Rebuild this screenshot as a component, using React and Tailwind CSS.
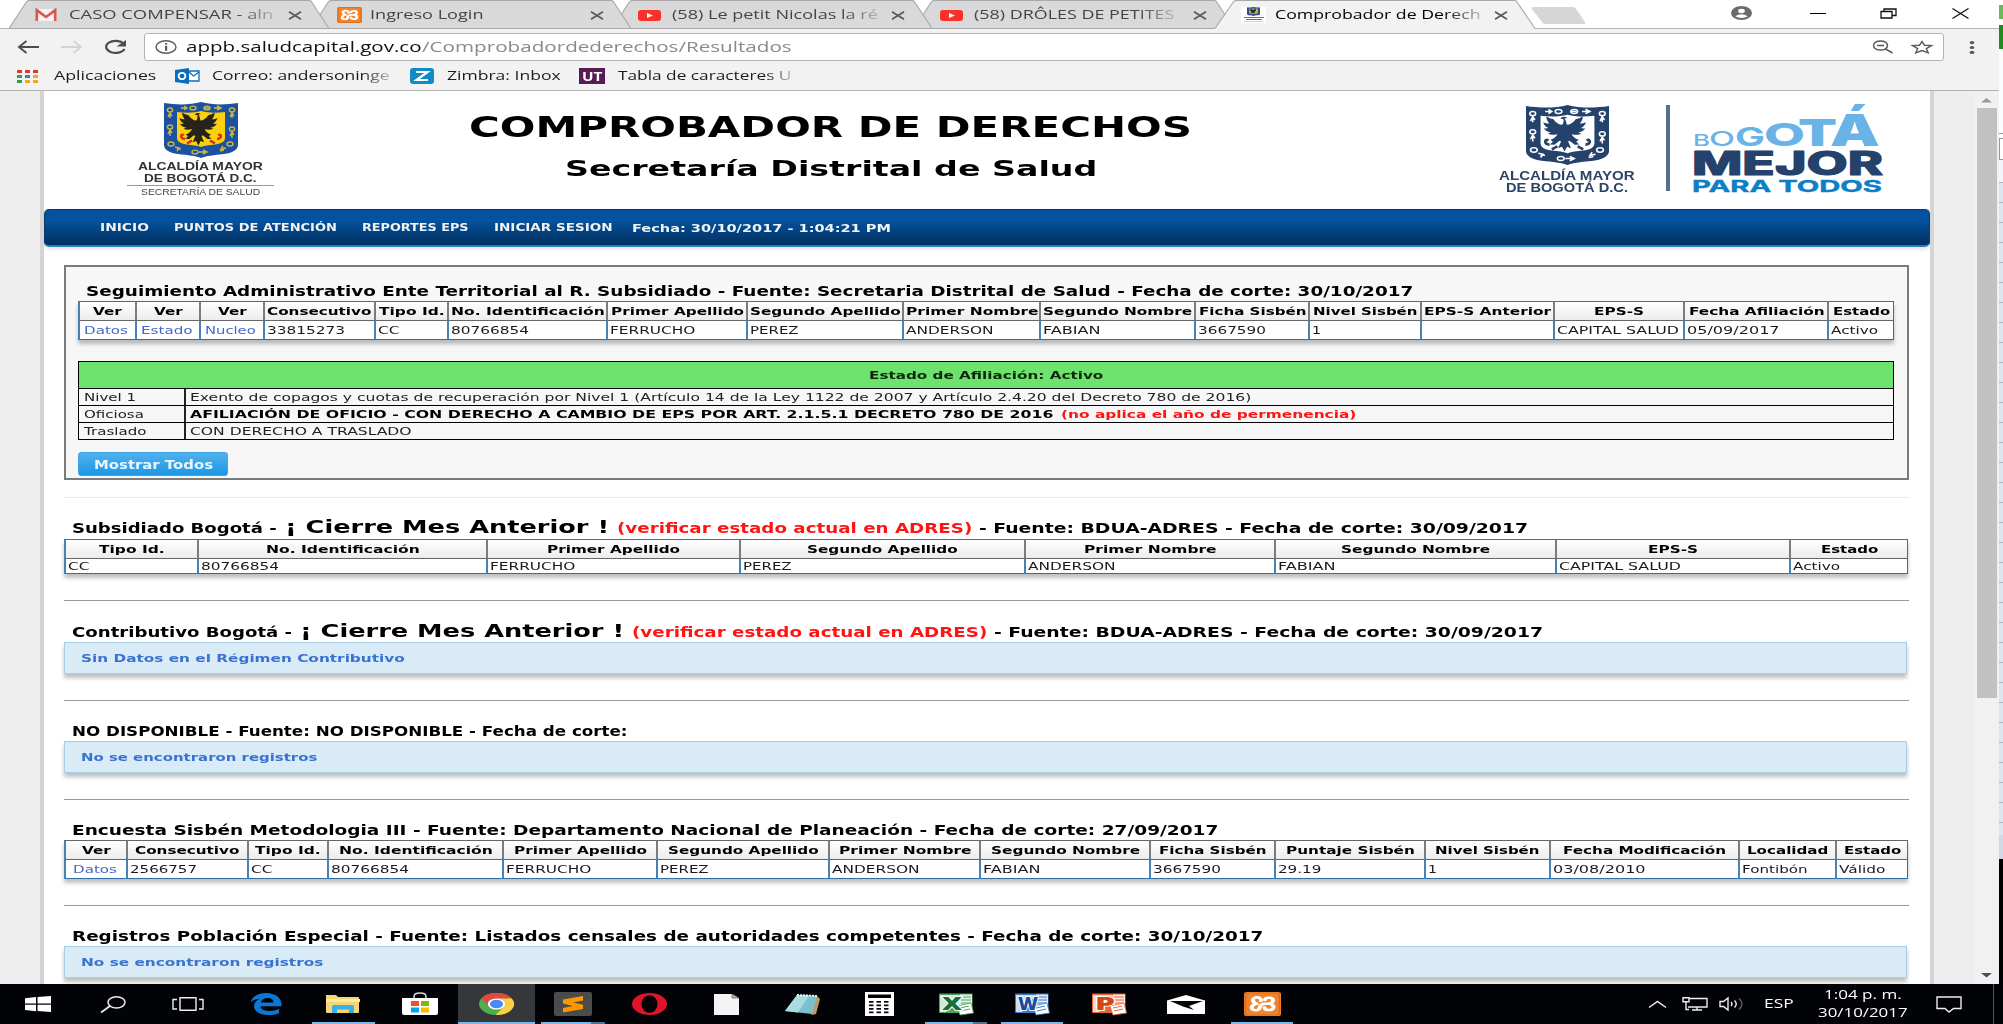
import { useLayoutEffect, useRef, useState } from "react";

const VERDANA = "font-['DejaVu_Sans',sans-serif]";
const SEGOE = "font-['Open_Sans','Noto_Sans',sans-serif]";

/* Single line of text, stretched horizontally to fill an exact width. */
function T({ w, className = "", children }) {
  const ref = useRef(null);
  const [k, setK] = useState(1);
  useLayoutEffect(() => {
    const fit = () => {
      if (ref.current && ref.current.offsetWidth) setK(w / ref.current.offsetWidth);
    };
    fit();
    document.fonts?.ready.then(fit);
  }, [w, children]);
  return (
    <span className={`block shrink-0 whitespace-nowrap ${className}`} style={{ width: w }}>
      <span ref={ref} className="inline-block origin-left" style={{ transform: `scaleX(${k})` }}>
        {children}
      </span>
    </span>
  );
}

function Svg({ w, h, vb, className = "", children }) {
  return (
    <svg width={w} height={h} viewBox={vb || `0 0 ${w} ${h}`} preserveAspectRatio="none" className={`block shrink-0 overflow-visible ${className}`}>
      {children}
    </svg>
  );
}

/* ---------- Icons ---------- */

const Gmail = () => (
  <Svg w={22} h={12} vb="0 0 22 12">
    <path d="M1 0h20v12H1z" fill="#f5f1f1" />
    <path d="M1.800 12V1.200L11 8l9.200-6.800V12" fill="none" stroke="#d9584c" strokeWidth="2.600" />
  </Svg>
);

const Xampp = ({ w, h }) => (
  <Svg w={w} h={h} vb="0 0 24 24">
    <rect width="24" height="24" rx="2" fill="#f0832f" />
    <rect x="1" y="1" width="22" height="22" rx="2" fill="none" stroke="#e26a14" strokeWidth="1" />
    <g fill="none" stroke="#fff" strokeWidth="2.600" strokeLinecap="round" strokeLinejoin="round">
      <path d="M11 9V8a2.600 2.600 0 0 0-5.200 0c0 2 .8 3 2.500 3.700-2 .7-3.300 1.900-3.300 4a2.600 2.600 0 0 0 5.200 0c0-2.500 1.500-4 4-4h1.300" />
      <path d="M13.500 8c.3-3 5-3 5.300 0 .2 2-.8 3.200-2.400 3.800 2 .6 3 2 2.700 4-.6 3-5.600 3-5.800-.2" />
    </g>
  </Svg>
);

const YouTube = () => (
  <Svg w={23} h={11} vb="0 0 23 11">
    <rect width="23" height="11" rx="3" fill="#f8312f" />
    <path d="M9 3l6 2.500L9 8z" fill="#fff" />
  </Svg>
);

const Cross = () => (
  <Svg w={14} h={9} vb="0 0 14 9">
    <path d="M1 .7l12 7.600M13 .7L1 8.300" stroke="#5a5a5a" strokeWidth="1.700" />
  </Svg>
);

const EAGLE =
  "M37 16c-2-1.800-4-.8-4.600.2l2 .6c.2 1.600 0 3-.8 4.200-2 0-4.400-1.600-6-4.400-1.400 0-3-.8-4.600-2 .2 3 1.200 4.400 2 5.400-1.600 0-3-.4-4-1 .6 2.400 2 3.600 3.400 4.400-1 .4-2 .4-3 .2 1 2 3 2.800 4.600 3-.6.6-1.200.8-2 1 2 1.200 4.600 1 6.400.2-.6 1.600-2 3.400-4.600 4.400l1.600 1.400-2 2 3 .2 3.400-3 1 .6-2 5 2.600-1 1.600 3.600 1.800-3.600 2.600 1-2-5 1-.6 3.400 3 3-.2-2-2 1.600-1.400c-2.600-1-4-2.800-4.600-4.400 1.800.8 4.400 1 6.400-.2-.8-.2-1.400-.4-2-1 1.600-.2 3.600-1 4.600-3-1 .2-2 .2-3-.2 1.400-.8 2.800-2 3.400-4.400-1 .6-2.400 1-4 1 .8-1 1.800-2.400 2-5.400-1.600 1.200-3.200 2-4.600 2-1.600 2.800-4 4.400-6 4.400-.4-2-.6-3.600-1.600-5z";

function Shield({ w, h, frame, field, eagle, chain, fruit }) {
  return (
    <Svg w={w} h={h} vb="0 0 74 56">
      <path d="M0 1c13 2 26 2 37-1 11 3 24 3 37 1v42c0 5-6 8-14 9-10 1-18 2-23 4-5-2-13-3-23-4-8-1-14-4-14-9z" fill={frame} />
      <path d="M13 10c9 1 17 1 24-1 7 2 15 2 24 1v26c0 4-5 6-10 6.500-6 .5-10 1-14 2.500-4-1.500-8-2-14-2.500-5-.5-10-2.500-10-6.500z" fill={field} />
      <g fill="none" stroke={chain} strokeWidth="1.400">
        <ellipse cx="6" cy="8" rx="2.600" ry="2" />
        <path d="M4 15l2-4 2 3M6 11v5" />
        <ellipse cx="6" cy="25" rx="2.600" ry="2" />
        <path d="M4 32l2-4 2 3M6 28v6" />
        <ellipse cx="68" cy="8" rx="2.600" ry="2" />
        <path d="M66 15l2-4 2 3M68 11v5" />
        <ellipse cx="68" cy="27" rx="2.600" ry="2" />
        <path d="M66 34l2-4 2 3M68 30v6" />
        <path d="M17 6h6M20 4l3 2-3 2M45 6h-5M50 6h6M53 4l4 2-4 2" />
        <ellipse cx="29" cy="6" rx="3" ry="1.900" />
        <ellipse cx="43" cy="6" rx="3" ry="1.900" />
        <ellipse cx="7" cy="42" rx="3" ry="2" />
        <path d="M11 45l4 1-2 3M17 47h-4" />
        <ellipse cx="31" cy="50" rx="3" ry="1.900" />
        <path d="M35 50h6M39 48l4 2-4 2" />
        <ellipse cx="66" cy="42" rx="3" ry="2" />
        <path d="M62 46l-5 1 2-3M56 49l4-1" />
      </g>
      <path d={EAGLE} fill={eagle} transform="translate(-13 -7.750) scale(1.350 1.250)" />
      <path d="M20 33c-4-2-4 4 1 4M28 38.500l-5 3M54 33c4-2 4 4-1 4M46 38.500l5 3" stroke={fruit} strokeWidth="2.400" fill="none" />
    </Svg>
  );
}

/* ---------- Browser chrome ---------- */

const TABS = [
  { icon: <Gmail />, label: "CASO COMPENSAR - aln", w: 205, fade: true, gap: 12 },
  { icon: <Xampp w={25} h={16} />, label: "Ingreso Login", w: 113, gap: 8 },
  { icon: <YouTube />, label: "(58) Le petit Nicolas la ré", w: 206, fade: true, gap: 11 },
  { icon: <YouTube />, label: "(58) DRÔLES DE PETITES", w: 200, fade: true, gap: 11 },
  {
    icon: (
      <div className="flex h-4 w-[25px] flex-col items-center bg-white">
        <Shield w={13} h={9} frame="#2a4f8f" field="#e8c52a" eagle="#222" chain="#4a6ca0" fruit="#a33" />
        <div className="mt-px h-px w-5 bg-gray-500" />
        <div className="mt-px h-px w-4 bg-gray-500" />
        <div className="mt-px h-px w-5 bg-gray-300" />
      </div>
    ),
    label: "Comprobador de Derech",
    w: 205,
    fade: true,
    gap: 9,
    active: true,
  },
];
const TAB_Z = ["z-[4]", "z-[3]", "z-[2]", "z-[1]", "z-[5]"];

function Tab({ tab, index }) {
  return (
    <div className={`relative -mr-[18.500px] h-[29px] w-[320px] shrink-0 ${TAB_Z[index]}`}>
      <svg width="320" height="29" className="absolute inset-0">
        <path
          d={tab.active ? "M0 29V28.500L18 2.500Q19.500.5 21 .5H299Q301 .5 302 2L319.500 28.500V29z" : "M0 28.500L17 2.500Q18.500.5 20 .5H300Q302 .5 303 2.500L320 28.500z"}
          fill={tab.active ? "#f2f2f2" : "#d9d9d9"}
        />
        <path
          d={tab.active ? "M0 28.500L18 2.500Q19.500.5 21 .5H299Q301 .5 302 2L320 28.500" : "M0 28.500L17 2.500Q18.500.5 20 .5H300Q302 .5 303 2.500L320 28.500z"}
          fill="none"
          stroke="#a9a9a9"
          strokeWidth="1.200"
        />
      </svg>
      <div className="relative flex h-[29px] items-center pl-[26px] pt-px">
        {tab.icon}
        <div className="w-[236px] shrink-0" style={{ paddingLeft: tab.gap }}>
          <T
            w={tab.w}
            className={`text-[12px] leading-[28px] ${tab.active ? "text-black" : "text-[#444]"} ${tab.fade ? "[mask-image:linear-gradient(to_right,#000_82%,rgba(0,0,0,.25))]" : ""}`}
          >
            {tab.label}
          </T>
        </div>
      </div>
      <div className="absolute left-[279px] top-[11px]">
        <Cross />
      </div>
    </div>
  );
}

function TabStrip() {
  return (
    <div className="flex h-[29px] w-[1999px] bg-white pl-[9px] shadow-[inset_0_-1px_0_#b4b4b4]">
      {TABS.map((t, i) => (
        <Tab key={t.label} tab={t} index={i} />
      ))}
      <Svg w={55} h={18} className="ml-[14px] mt-[7px]">
        <path d="M3 0h39q2 0 3 2l9 13q1 2-2 2H14q-2 0-3-2L1 2Q0 0 3 0z" fill="#d6d6d6" />
      </Svg>
      <div className="ml-auto flex h-[26px] items-center">
        <Svg w={21} h={14} vb="0 0 20 20">
          <circle cx="10" cy="10" r="10" fill="#6b6b6b" />
          <circle cx="10" cy="7" r="3.200" fill="#fff" />
          <path d="M4 14.500q6-5.500 12 0-6 5-12 0z" fill="#fff" />
        </Svg>
        <div className="ml-[58px] h-px w-[16px] bg-black" />
        <Svg w={17} h={11} className="ml-[54px]">
          <path d="M1 3.500h11v6.500H1zM4 3V1h12v6.500h-3.500" fill="none" stroke="#111" strokeWidth="1.300" />
        </Svg>
        <Svg w={17} h={11} className="ml-[55px] mr-[30px]">
          <path d="M.5.5l16 10M16.500.5l-16 10" stroke="#111" strokeWidth="1.300" />
        </Svg>
      </div>
    </div>
  );
}

function Toolbar() {
  return (
    <div className="flex h-[36px] w-[1999px] items-center bg-[#f2f2f2] pl-[17px]">
      <Svg w={22} h={14}>
        <path d="M22 7H2M9.500 1L2 7l7.500 6" fill="none" stroke="#4d4d4d" strokeWidth="2" />
      </Svg>
      <Svg w={22} h={14} className="ml-[22px]">
        <path d="M0 7h20M12.500 1L20 7l-7.500 6" fill="none" stroke="#d4d4d4" strokeWidth="2" />
      </Svg>
      <Svg w={23} h={14} className="ml-[21px]">
        <path d="M19.500 3.500A9.500 6 0 1 0 20.500 9" fill="none" stroke="#4d4d4d" strokeWidth="2.200" />
        <path d="M22 0v6.500H12.500z" fill="#4d4d4d" />
      </Svg>
      <div className="ml-[17px] flex h-[28px] w-[1800px] items-center rounded-[3px] border border-[#b3b3b3] bg-white pl-[10px]">
        <Svg w={22} h={14}>
          <ellipse cx="11" cy="7" rx="10" ry="6.200" fill="none" stroke="#5a5a5a" strokeWidth="1.400" />
          <path d="M10 3h2.200v1.500H10zM10 5.700h2.200v5H10z" fill="#5a5a5a" />
        </Svg>
        <div className="ml-[9px] flex text-[14px] leading-[26px]">
          <T w={236} className="text-[#111]">appb.saludcapital.gov.co</T>
          <T w={370} className="text-[#8a8a8a]">/Comprobadordederechos/Resultados</T>
        </div>
        <Svg w={22} h={14} className="ml-auto">
          <ellipse cx="8.500" cy="5.500" rx="7" ry="4.600" fill="none" stroke="#5a5a5a" strokeWidth="1.500" />
          <path d="M5 5.500h7M13.500 9l7 4" stroke="#5a5a5a" strokeWidth="1.500" />
        </Svg>
        <Svg w={22} h={14} vb="0 0 22 14" className="ml-[17px] mr-[10px]">
          <path d="M11 1.500l2.500 3.700 7 .4-5.200 3 1.900 4.200L11 10.500l-6.200 2.300 1.900-4.200-5.200-3 7-.4z" fill="none" stroke="#5a5a5a" strokeWidth="1.400" />
        </Svg>
      </div>
      <Svg w={6} h={13} className="ml-[25px]">
        <g fill="#5a5a5a">
          <ellipse cx="3" cy="1.600" rx="2.400" ry="1.600" />
          <ellipse cx="3" cy="6.500" rx="2.400" ry="1.600" />
          <ellipse cx="3" cy="11.400" rx="2.400" ry="1.600" />
        </g>
      </Svg>
    </div>
  );
}

const APP_DOTS = ["#e8352e", "#e8352e", "#e8352e", "#2ba24c", "#2f7de1", "#f2a91c", "#2ba24c", "#f2a91c", "#f2a91c"];

function Bookmarks() {
  return (
    <div className="flex h-[26px] w-[1999px] items-center border-b border-[#b3b3b3] bg-[#f2f2f2] pb-[3px] pl-[17px] text-[12px] leading-[22px] text-[#1c1c1c]">
      <div className="grid w-[21px] grid-cols-3 gap-x-[3px] gap-y-[2px]">
        {APP_DOTS.map((c, i) => (
          <div key={i} className="h-[3px]" style={{ background: c }} />
        ))}
      </div>
      <T w={102} className="ml-[16px]">Aplicaciones</T>
      <Svg w={25} h={16} className="ml-[19px]">
        <path d="M13 3h11v10H13z" fill="#fff" stroke="#0a6cbd" strokeWidth="1.300" />
        <path d="M14 4l4.500 4L24 4" fill="none" stroke="#0a6cbd" strokeWidth="1.300" />
        <path d="M0 2l14-2v16L0 14z" fill="#0a6cbd" />
        <ellipse cx="7" cy="8" rx="3.400" ry="3.200" fill="none" stroke="#fff" strokeWidth="1.800" />
      </Svg>
      <T w={178} className="ml-[12px] [mask-image:linear-gradient(to_right,#000_84%,rgba(0,0,0,.25))]">Correo: andersoninge</T>
      <Svg w={24} h={16} className="ml-[20px]">
        <rect width="24" height="16" rx="3" fill="#0f8bc7" />
        <path d="M6 4h11.500L6.500 12H18" fill="none" stroke="#fff" strokeWidth="2.200" />
      </Svg>
      <T w={114} className="ml-[13px]">Zimbra: Inbox</T>
      <div className="ml-[18px] flex h-[16px] w-[26px] items-center justify-center bg-[#571c56]">
        <T w={20} className="text-[13px] font-bold leading-[16px] text-white">UT</T>
      </div>
      <T w={174} className="ml-[13px] [mask-image:linear-gradient(to_right,#000_84%,rgba(0,0,0,.25))]">Tabla de caracteres U</T>
    </div>
  );
}

/* ---------- Page ---------- */

function LogoSalud() {
  return (
    <div className="ml-[83px] flex w-[147px] flex-col items-center pt-[11px] font-['Liberation_Sans',sans-serif]">
      <Shield w={74} h={56} frame="#1c50a0" field="#fbd00c" eagle="#26231c" chain="#c9b944" fruit="#e3261c" />
      <T w={125} className="mt-[2px] text-[11px] font-bold leading-[12px] text-[#333]">ALCALDÍA MAYOR</T>
      <T w={113} className="text-[11px] font-bold leading-[12px] text-[#333]">DE BOGOTÁ D.C.</T>
      <div className="mt-px h-px w-[147px] bg-[#999]" />
      <T w={119} className="mt-px text-[8.500px] leading-[10px] text-[#444]">SECRETARÍA DE SALUD</T>
    </div>
  );
}

/* Each letter: glyph, x, width, size, weight */
const BOGOTA = [
  ["B", 0, 17, 16.5, 500],
  ["O", 16, 26, 20.5, 500],
  ["G", 42, 30, 25, 700],
  ["O", 71, 41, 31.5, 800],
  ["T", 105, 39, 36.5, 900],
  ["Á", 137, 50, 43.5, 900],
];

function LogoBogota() {
  return (
    <div className="ml-auto mr-[47px] flex pt-[14px]">
      <div className="flex w-[136px] flex-col items-center font-['Liberation_Sans',sans-serif] font-bold text-[#2c4365]">
        <Shield w={83} h={60} frame="#24426b" field="#fff" eagle="#24426b" chain="#fff" fruit="#24426b" />
        <T w={136} className="mt-[5px] text-[12px] leading-[12px]">ALCALDÍA MAYOR</T>
        <T w={122} className="text-[12px] leading-[12px]">DE BOGOTÁ D.C.</T>
      </div>
      <div className="ml-[31px] h-[86px] w-[4px] bg-[#54708f]" />
      <svg width="190" height="92" className="ml-[23px] -mt-[2px] shrink-0 overflow-visible font-['Inter',sans-serif]">
        {BOGOTA.map(([ch, x, w, size, weight], i) => (
          <text key={i} x={x} y="43" fontSize={size} textLength={w} lengthAdjust="spacingAndGlyphs" fill="#69b3e7" fontWeight={weight}>
            {ch}
          </text>
        ))}
        <text x="-1" y="71.500" fontSize="32" fontWeight="800" textLength="191" lengthAdjust="spacingAndGlyphs" fill="#24426b" stroke="#24426b" strokeWidth="1" strokeLinejoin="round">
          MEJOR
        </text>
        <text x="-1" y="88.500" fontSize="16.500" fontWeight="700" textLength="190" lengthAdjust="spacingAndGlyphs" fill="#0d7fc6" stroke="#0d7fc6" strokeWidth=".4">
          PARA TODOS
        </text>
      </svg>
    </div>
  );
}

function Header() {
  return (
    <header className="flex h-[118px]">
      <LogoSalud />
      <div className="ml-[195px] flex w-[723px] flex-col items-center pt-[21px] font-bold text-black">
        <T w={723} className="text-[27.500px] leading-[30px]">COMPROBADOR DE DERECHOS</T>
        <T w={532} className="mt-[12px] text-[21px] leading-[30px]">Secretaría Distrital de Salud</T>
      </div>
      <LogoBogota />
    </header>
  );
}

function Nav() {
  return (
    <nav className="flex h-[38px] items-center rounded-[5px] border border-b-2 border-[#083a6b] border-b-[#2b7fbd] bg-gradient-to-b from-[#03529f] from-30% to-[#03305f] pl-[55px] text-[11px] font-bold leading-[36px] text-[#eef3f8] shadow-[0_2px_4px_rgba(0,0,0,.12)]">
      <T w={49}>INICIO</T>
      <T w={163} className="ml-[25px]">PUNTOS DE ATENCIÓN</T>
      <T w={107} className="ml-[25px]">REPORTES EPS</T>
      <T w={118} className="ml-[25px]">INICIAR SESION</T>
      <T w={259} className="ml-[20px] pt-[2px]">Fecha: 30/10/2017 - 1:04:21 PM</T>
    </nav>
  );
}

const W = {
  Ver: 29, Consecutivo: 105, "Tipo Id.": 66, "No. Identificación": 154, "Primer Apellido": 133,
  "Segundo Apellido": 151, "Primer Nombre": 132, "Segundo Nombre": 149, "Ficha Sisbén": 107,
  "Nivel Sisbén": 105, "EPS-S Anterior": 127, "EPS-S": 50, "Fecha Afiliación": 135, Estado: 57,
  "Puntaje Sisbén": 129, "Fecha Modificación": 163, Localidad: 81,
};
const V = {
  Datos: 44, Estado: 51, Nucleo: 51, 33815273: 78, CC: 21, 80766854: 78, FERRUCHO: 85, PEREZ: 49,
  ANDERSON: 88, FABIAN: 57, 3667590: 68, 1: 9, "CAPITAL SALUD": 122, "05/09/2017": 92, Activo: 47,
  2566757: 67, "29.19": 44, "03/08/2010": 92, "Fontibón": 66, "Válido": 46,
};

/* cols: [header, value, width, isLink] */
function DataTable({ cols, short }) {
  return (
    <div className="flex w-fit text-[11px] text-black shadow-[0_4px_4px_rgba(0,0,0,.25)]">
      {cols.map(([head, value, width, link], i) => (
        <div key={i} style={{ width }}>
          <div className={`flex h-[20px] items-center justify-center border-y border-l-2 border-[#666] border-l-[#7c7c7c] bg-gradient-to-b from-white to-[#ececec] pt-[2px] font-bold leading-[16px] ${i === 0 ? "border-l-[#4583b4]" : ""} ${i === cols.length - 1 ? "border-r" : ""}`}>
            <T w={W[head]}>{head}</T>
          </div>
          <div className={`flex items-center border-b border-l-2 border-[#2f6fa5] border-l-[#4583b4] bg-white ${short ? "h-[15px] pt-px leading-[13px]" : "h-[19px] pt-[2px] leading-[14px]"} ${link ? "justify-center pr-[3px] text-[#4468c8]" : "pl-[2px] text-[#1a1a1a]"} ${i === cols.length - 1 ? "border-r" : ""}`}>
            {value && <T w={V[value]}>{value}</T>}
          </div>
        </div>
      ))}
    </div>
  );
}

const TABLE_SEG = [
  ["Ver", "Datos", 57, true], ["Ver", "Estado", 64, true], ["Ver", "Nucleo", 64, true],
  ["Consecutivo", "33815273", 111], ["Tipo Id.", "CC", 73], ["No. Identificación", "80766854", 159],
  ["Primer Apellido", "FERRUCHO", 140], ["Segundo Apellido", "PEREZ", 156], ["Primer Nombre", "ANDERSON", 137],
  ["Segundo Nombre", "FABIAN", 155], ["Ficha Sisbén", "3667590", 114], ["Nivel Sisbén", "1", 112],
  ["EPS-S Anterior", "", 133], ["EPS-S", "CAPITAL SALUD", 130], ["Fecha Afiliación", "05/09/2017", 144],
  ["Estado", "Activo", 67],
];
const TABLE_SUB = [
  ["Tipo Id.", "CC", 133], ["No. Identificación", "80766854", 289], ["Primer Apellido", "FERRUCHO", 253],
  ["Segundo Apellido", "PEREZ", 285], ["Primer Nombre", "ANDERSON", 250], ["Segundo Nombre", "FABIAN", 281],
  ["EPS-S", "CAPITAL SALUD", 234], ["Estado", "Activo", 119],
];
const TABLE_ENC = [
  ["Ver", "Datos", 62, true], ["Consecutivo", "2566757", 121], ["Tipo Id.", "CC", 80],
  ["No. Identificación", "80766854", 175], ["Primer Apellido", "FERRUCHO", 154], ["Segundo Apellido", "PEREZ", 172],
  ["Primer Nombre", "ANDERSON", 151], ["Segundo Nombre", "FABIAN", 170], ["Ficha Sisbén", "3667590", 125],
  ["Puntaje Sisbén", "29.19", 150], ["Nivel Sisbén", "1", 125], ["Fecha Modificación", "03/08/2010", 189],
  ["Localidad", "Fontibón", 97], ["Estado", "Válido", 73],
];

function StatusRow({ label, w, children }) {
  return (
    <div className="flex h-[17px] border-b border-black pt-px leading-[16px]">
      <div className="-mt-px w-[107px] border-r-2 border-[#222] pl-[5px] pt-px">
        <T w={w}>{label}</T>
      </div>
      <div className="flex pl-[4px]">{children}</div>
    </div>
  );
}

function SeguimientoPanel() {
  return (
    <section className="h-[215px] w-[1845px] border-2 border-[#7b7b7b] bg-[#f7f7f7] pl-[12px] pt-[15px]">
      <T w={1327} className="ml-[8px] text-[14px] font-bold leading-[19px]">
        Seguimiento Administrativo Ente Territorial al R. Subsidiado - Fuente: Secretaria Distrital de Salud - Fecha de corte: 30/10/2017
      </T>
      <DataTable cols={TABLE_SEG} />
      <div className="mt-[21px] w-[1816px] border-x border-t border-black text-[11px] text-[#222]">
        <div className="flex h-[27px] items-center justify-center border-b border-black bg-[#6de36d] pt-[2px] font-bold leading-[24px] text-[#0c260c]">
          <T w={235}>Estado de Afiliación: Activo</T>
        </div>
        <StatusRow label="Nivel 1" w={52}>
          <T w={1062}>Exento de copagos y cuotas de recuperación por Nivel 1 (Artículo 14 de la Ley 1122 de 2007 y Artículo 2.4.20 del Decreto 780 de 2016)</T>
        </StatusRow>
        <StatusRow label="Oficiosa" w={60}>
          <T w={864} className="font-bold text-black">AFILIACIÓN DE OFICIO - CON DERECHO A CAMBIO DE EPS POR ART. 2.1.5.1 DECRETO 780 DE 2016</T>
          <T w={295} className="ml-[7px] font-bold text-[#ff1414]">(no aplica el año de permenencia)</T>
        </StatusRow>
        <StatusRow label="Traslado" w={63}>
          <T w={222}>CON DERECHO A TRASLADO</T>
        </StatusRow>
      </div>
      <button className="mt-[12px] flex h-[24px] w-[150px] items-center justify-center rounded-[3px] border border-[#3fa5e4] bg-gradient-to-b from-[#4fb1ec] to-[#1797e5] pt-[2px] text-[12px] font-bold leading-[20px] text-[#e9f5fd]">
        <T w={119} className="text-left">Mostrar Todos</T>
      </button>
    </section>
  );
}

const Rule = ({ className }) => <div className={`h-px w-[1845px] ${className}`} />;

const Caption = ({ w, children }) => (
  <T w={w} className="ml-[8px] text-[14px] font-bold leading-[20px]">{children}</T>
);

function MonthCaption({ title, titleW, height }) {
  return (
    <div className={`ml-[8px] flex items-baseline text-[14px] font-bold leading-[20px] ${height}`}>
      <T w={titleW}>{title}</T>
      <T w={324} className="ml-[8px] text-[17px]">¡ Cierre Mes Anterior !</T>
      <T w={355} className="ml-[8px] text-[#ff1414]">(verificar estado actual en ADRES)</T>
      <T w={549} className="ml-[7px]">- Fuente: BDUA-ADRES - Fecha de corte: 30/09/2017</T>
    </div>
  );
}

const Notice = ({ w, children }) => (
  <div className="flex h-[32px] w-[1843px] items-center border border-[#a9cde6] bg-[#d8ebf6] pl-[16px] pt-px text-[11px] font-bold leading-[28px] text-[#3a72cf] shadow-[0_4px_4px_rgba(0,0,0,.25)]">
    <T w={w}>{children}</T>
  </div>
);

function Page() {
  return (
    <div className="flex h-[893px] w-[1999px] overflow-hidden bg-[#eeeeee]">
      <div className={`ml-[40px] h-[893px] w-[1894px] shrink-0 overflow-hidden border-x-[4px] border-[#d4d4d4] bg-white text-black ${VERDANA}`}>
        <Header />
        <Nav />
        <main className="ml-[20px] pt-[18px]">
          <SeguimientoPanel />
          <Rule className="mt-[17px] bg-[#e8e8e8]" />
          <div className="pt-[19px]">
            <MonthCaption title="Subsidiado Bogotá -" titleW={205} height="h-[22px]" />
            <DataTable cols={TABLE_SUB} short />
          </div>
          <Rule className="mt-[26px] bg-[#999]" />
          <div className="pt-[20px]">
            <MonthCaption title="Contributivo Bogotá -" titleW={220} height="h-[21px]" />
            <Notice w={324}>Sin Datos en el Régimen Contributivo</Notice>
          </div>
          <Rule className="mt-[26px] bg-[#999]" />
          <div className="pt-[20px]">
            <Caption w={555}>NO DISPONIBLE - Fuente: NO DISPONIBLE - Fecha de corte:</Caption>
            <Notice w={236}>No se encontraron registros</Notice>
          </div>
          <Rule className="mt-[26px] bg-[#999]" />
          <div className="pt-[20px]">
            <Caption w={1146}>Encuesta Sisbén Metodologia III - Fuente: Departamento Nacional de Planeación - Fecha de corte: 27/09/2017</Caption>
            <DataTable cols={TABLE_ENC} />
          </div>
          <Rule className="mt-[26px] bg-[#999]" />
          <div className="pt-[20px]">
            <Caption w={1191}>Registros Población Especial - Fuente: Listados censales de autoridades competentes - Fecha de corte: 30/10/2017</Caption>
            <Notice w={242}>No se encontraron registros</Notice>
          </div>
        </main>
      </div>
      <div className="ml-auto flex w-[25px] flex-col items-center bg-[#f1f1f1]">
        <Svg w={11} h={5} className="mt-[7px]">
          <path d="M0 4.500L5.500 0 11 4.500z" fill="#9a9a9a" />
        </Svg>
        <div className="mt-[5px] h-[590px] w-[20px] bg-[#c1c1c1]" />
        <Svg w={11} h={5} className="mb-[6px] mt-auto">
          <path d="M0 0h11L5.500 4.500z" fill="#505050" />
        </Svg>
      </div>
    </div>
  );
}

/* Edge of the spreadsheet window on the neighbouring display. */
function NeighbourEdge() {
  return (
    <div className="h-[984px] w-[4px] bg-white">
      <div className="h-[5px] bg-white" />
      <div className="h-[14px] bg-[#69b85a]" />
      <div className="h-[6px] bg-white" />
      <div className="h-[24px] bg-[#1f8a1f]" />
      <div className="h-[84px] bg-[#fbfcfd]" />
      <div className="h-px bg-[#8a98ab]" />
      <div className="h-[4px] bg-white" />
      <div className="h-[22px] border border-r-0 border-[#8a98ab] bg-white" />
      <div className="h-[23px] border-b border-[#a9b4c4] bg-[#f1f4f8]" />
      <div className="h-[652px] bg-[#dde5ee]">
        {Array.from({ length: 32 }, (_, i) => (
          <div key={i} className="h-[20px] border-b border-[#a9b4c4]" />
        ))}
      </div>
      <div className="h-[24px] bg-[#cfd8e4]" />
      <div className="h-[125px] bg-black" />
    </div>
  );
}

/* ---------- Taskbar ---------- */

const Office = ({ letter, color, dark }) => (
  <Svg w={36} h={22} vb="0 0 36 22">
    <path d="M1 1.500q0-1 1-1h32.500v19.500H2q-1 0-1-1z" fill={color} />
    <path d="M2 2h20L8 19H2z" fill="#fff" opacity=".75" />
    <path d="M22 1.500h12v12H18z" fill="#fff" opacity=".85" />
    <path d="M23 4h10M23 7h10M23 10h10" stroke={color} strokeWidth="1" />
    <path d="M19 13l14-3 2.500 10L22 22z" fill="#fff" stroke={color} strokeWidth=".8" />
    <path d="M22 15l9-2M23 18l9-2" stroke={color} strokeWidth="1" />
    <text x="4" y="17" fontSize="18" fontWeight="800" textLength="20" lengthAdjust="spacingAndGlyphs" fill={dark} stroke="#fff" strokeWidth="1.600" paintOrder="stroke">
      {letter}
    </text>
  </Svg>
);

const TASKS = [
  {
    icon: (
      <Svg w={26} h={16}>
        <path d="M0 2.200L11 1v6.500H0zM12.500.9L26 0v7.500H12.500zM0 8.700h11v6.500L0 14zM12.500 8.700H26V16l-13.500-1z" fill="#fff" />
      </Svg>
    ),
  },
  {
    icon: (
      <Svg w={26} h={17}>
        <ellipse cx="16.500" cy="6.300" rx="8.500" ry="5.600" fill="none" stroke="#eee" strokeWidth="1.500" />
        <path d="M10 10L1 16.500" stroke="#eee" strokeWidth="1.700" />
      </Svg>
    ),
  },
  {
    icon: (
      <Svg w={32} h={14} className="-ml-[4px]">
        <path d="M8 .7h16v12.600H8zM5 2.500H1v9.500h4M27 2.500h4v9.500h-4" fill="none" stroke="#eee" strokeWidth="1.400" />
      </Svg>
    ),
  },
  {
    icon: (
      <Svg w={32} h={22} vb="0 0 32 22">
        <path d="M.5 9.500C2 3.500 8 0 16 0c9.500 0 15.500 5 15.500 11.500v1.800H10.500c.3 3 4 4.700 8.500 4.700 4 0 7.500-.8 10-2.200v4.400C26 21.500 22 22 18 22 9 22 4 18 4 13.300 4 10 6.300 7.300 10.500 5.800 6 6 2.500 7.500.5 9.500zM11 9.500h12.500C23.500 6.700 21 5 17.500 5S11.500 6.700 11 9.500z" fill="#0a78d7" />
      </Svg>
    ),
  },
  {
    icon: (
      <Svg w={34} h={18}>
        <path d="M0 0h10l2 2h20q1 0 1 1v14q0 1-1 1H1q-1 0-1-1z" fill="#f6d672" />
        <path d="M0 4h34v3H0z" fill="#fbe9a6" />
        <path d="M6 18v-6q0-2 2-2h18q2 0 2 2v6h-5v-3.500H11V18z" fill="#35b3e8" />
      </Svg>
    ),
    bar: "w-[63px]",
  },
  {
    icon: (
      <Svg w={36} h={23} className="-mt-[2px]">
        <path d="M12 7V4.500C12 2.500 14 1 18 1s6 1.500 6 3.500V7" fill="none" stroke="#ddd" strokeWidth="1.500" />
        <path d="M0 6h36v15q0 2-2 2H2q-2 0-2-2z" fill="#fff" />
        <path d="M9 9h8v5H9z" fill="#f2502a" />
        <path d="M19 9h8v5h-8z" fill="#7fba00" />
        <path d="M9 15.500h8v5H9z" fill="#00a4ef" />
        <path d="M19 15.500h8v5h-8z" fill="#ffb900" />
      </Svg>
    ),
  },
  {
    icon: (
      <Svg w={35} h={22} vb="0 0 36 36">
        <circle cx="18" cy="18" r="18" fill="#4caf50" />
        <path d="M2.400 9A18 18 0 0 1 33.600 9L18 10z" fill="#dd4b3e" />
        <path d="M2.400 9A18 18 0 0 1 33.600 9H18l-7.800 13.500z" fill="#dd4b3e" />
        <path d="M33.600 9A18 18 0 0 1 17 36l8.800-13.500A9 9 0 0 0 18 9z" fill="#fdd044" />
        <circle cx="18" cy="18" r="9" fill="#fff" />
        <circle cx="18" cy="18" r="6.800" fill="#4a8af4" />
      </Svg>
    ),
    active: true,
    bar: "w-full",
  },
  {
    icon: (
      <Svg w={38} h={24}>
        <rect width="38" height="24" rx="2" fill="#4b4b4b" />
        <path d="M9 7.500l20-3.500v4.500l-10 2 10 2.200V17L9 20.500V16l10-2-10-2.500z" fill="#ff9800" />
      </Svg>
    ),
    bar: "w-[64px]",
    stacked: true,
  },
  {
    icon: (
      <Svg w={35} h={22}>
        <ellipse cx="17.500" cy="11" rx="17.500" ry="11" fill="#e0132a" />
        <ellipse cx="17.500" cy="11" rx="8" ry="8.800" fill="#020203" />
      </Svg>
    ),
  },
  {
    icon: (
      <Svg w={25} h={21}>
        <path d="M0 0h18l7 4v17H0z" fill="#f4f4f4" />
        <path d="M18 0v4h7z" fill="#bbb" stroke="#444" strokeWidth=".6" />
      </Svg>
    ),
  },
  {
    icon: (
      <Svg w={35} h={21}>
        <path d="M12 1l20 1 3 3-4 15-4 1z" fill="#b99b69" />
        <path d="M12 1l20 1-5 18L0 17z" fill="#7cc0cd" />
        <path d="M12 1l12 .6L13 18.500 0 17z" fill="#a9dbe3" />
        <path d="M12 1l20 1" stroke="#e6f2f4" strokeWidth="2" strokeDasharray="2 1" />
      </Svg>
    ),
  },
  {
    icon: (
      <Svg w={29} h={24}>
        <path d="M0 0h29v24H0z" fill="#fff" />
        <path d="M3 2.500h23V6H3z" fill="#050505" />
        <g fill="#050505">
          {[9, 12.5, 16, 19.5].map((y) => [4, 11.5, 19].map((x) => <rect key={`${x}-${y}`} x={x} y={y} width="4.500" height="1.700" />))}
        </g>
      </Svg>
    ),
  },
  { icon: <Office letter="X" color="#4ea45a" dark="#17703a" />, bar: "w-[62px]", stacked: true },
  { icon: <Office letter="W" color="#3f7cc4" dark="#1b4a9c" />, bar: "w-[62px]" },
  { icon: <Office letter="P" color="#e8643a" dark="#d14719" /> },
  {
    icon: (
      <Svg w={38} h={19}>
        <path d="M0 5.500L19 0l19 5.500V19H0z" fill="#fff" />
        <path d="M3 6h33L22 11l5 4-11-3.500z" fill="#050505" />
      </Svg>
    ),
  },
  { icon: <Xampp w={37} h={24} />, bar: "w-[62px]" },
];

function Taskbar() {
  return (
    <footer className={`flex h-[40px] w-[2003px] bg-[#020306] text-white ${SEGOE}`}>
      {TASKS.map((t, i) => (
        <div key={i} className={`relative flex h-[40px] shrink-0 items-center justify-center ${i ? "w-[76.600px]" : "w-[75px]"} ${t.active ? "bg-[#36373a]" : ""}`}>
          {t.icon}
          {t.bar && (
            <div className={`absolute bottom-0 flex h-[2px] bg-[#76b9ed] ${t.bar}`}>
              {t.stacked && <div className="ml-auto w-[14px] bg-[#4a7396]" />}
            </div>
          )}
        </div>
      ))}
      <div className="ml-auto flex items-center">
        <Svg w={19} h={8}>
          <path d="M1 7.500l8.500-6 8.500 6" fill="none" stroke="#eee" strokeWidth="1.500" />
        </Svg>
        <Svg w={26} h={14} className="ml-[15px]">
          <path d="M7 1.500h18v8.500H6M1 .7h6v4H1zM4 5v7.500h3M10 13h10M15 10v3" fill="none" stroke="#eee" strokeWidth="1.400" />
        </Svg>
        <Svg w={26} h={14} className="ml-[11px]">
          <path d="M1 4.500h3.500L9 1v12L4.500 9.500H1z" fill="none" stroke="#eee" strokeWidth="1.400" />
          <path d="M12 5q2 2 0 4M15.500 3.500q3.500 3.500 0 7" fill="none" stroke="#eee" strokeWidth="1.400" />
          <path d="M20 1.500q6 5.500 0 11" fill="none" stroke="#666" strokeWidth="1.300" />
        </Svg>
        <T w={29} className="ml-[19px] text-[12px] leading-[20px]">ESP</T>
        <div className="ml-[25px] flex w-[90px] flex-col items-center text-[12px]">
          <T w={78} className="leading-[18px]">1:04 p. m.</T>
          <T w={90} className="leading-[18px]">30/10/2017</T>
        </div>
        <Svg w={26} h={17} className="ml-[28px]">
          <path d="M1 1h24v11.500h-7.500L13 16l-4-3.500H1z" fill="none" stroke="#eee" strokeWidth="1.400" />
        </Svg>
        <div className="ml-[31px] mr-[9px] h-[40px] w-px bg-[#555]" />
      </div>
    </footer>
  );
}

export default function App() {
  return (
    <div className={`h-[1024px] w-[2003px] overflow-hidden bg-white ${SEGOE}`}>
      <div className="flex">
        <div className="w-[1999px] shrink-0">
          <TabStrip />
          <Toolbar />
          <Bookmarks />
          <Page />
        </div>
        <NeighbourEdge />
      </div>
      <Taskbar />
    </div>
  );
}
